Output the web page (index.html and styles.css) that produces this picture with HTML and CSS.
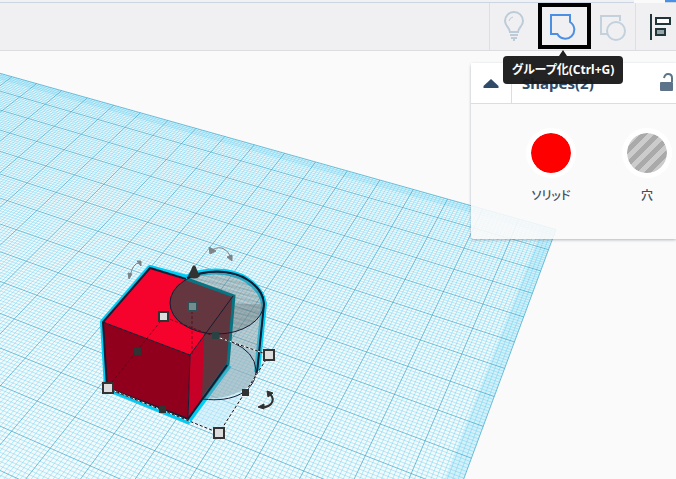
FILE: index.html
```html
<!DOCTYPE html>
<html lang="ja">
<head>
<meta charset="utf-8">
<title>3D デザイン</title>
<link rel="stylesheet" href="styles.css">
</head>
<body>
<div class="app">
  <div class="tabstrip"><span class="tab-edge"></span><span class="tab-active"></span></div>
  <header class="toolbar">
    <div class="tools">
      <button class="tool" aria-label="ヒント">
        <svg width="24" height="32" viewBox="0 0 24 32" fill="none" stroke="#bccbd8" stroke-width="2">
          <path d="M8 21C8 17 3 15 3 10a9 9 0 0 1 18 0c0 5-5 7-5 11z"/>
          <path d="M7 10a5 5 0 0 1 4-4" stroke-width="1"/>
          <path d="M8 24h8M9 27h6M11 29h2" stroke-width="2"/>
        </svg>
      </button>
      <button class="tool tool-active" aria-label="グループ化" aria-describedby="tip">
        <svg width="28" height="28" viewBox="0 0 28 28" fill="none" stroke="#4b90e2" stroke-width="2">
          <path d="M2 3h19v7A9 9 0 1 1 8.400 22H2z"/>
        </svg>
        <span class="tooltip" id="tip" role="tooltip">グループ化(Ctrl+G)</span>
      </button>
      <button class="tool" aria-label="グループ解除">
        <svg width="28" height="28" viewBox="0 0 28 28" fill="none" stroke="#c3d1dd" stroke-width="2">
          <path d="M21 8V3H2v18h6"/><circle cx="17" cy="18" r="9"/>
        </svg>
      </button>
      <button class="tool tool-align" aria-label="整列">
        <svg width="24" height="28" viewBox="0 0 24 28" fill="none" stroke="#20363b" stroke-width="2">
          <path d="M2 1v26"/><path d="M7 5h14v6H7z" fill="#fff"/><path d="M7 16h9v6H7z" fill="#98a5a8"/>
        </svg>
      </button>
    </div>
  </header>
  <main class="workspace">
    <svg class="scene" viewBox="0 51 676 428" preserveAspectRatio="xMinYMin slice" role="img" aria-label="作業平面">
      <defs>
        <pattern id="hatch" width="5" height="5" patternUnits="userSpaceOnUse" patternTransform="rotate(12)">
          <path d="M0 2h5" stroke="#374d54" stroke-opacity=".13" stroke-width="2"/>
        </pattern>
      </defs>
      <g id="plane"></g>
      <g class="rotators">
        <path d="M130 276q3-13 9-13M212 250q7-4 12-1 5 3 6 7"/>
        <path class="tip" d="M137 261l4 0 0 5zM128 273l4 1-3 5zM209 247l1 7 6-3zM227 257l5-2 0 6z"/>
      </g>
      <path class="plane-shadow" d="M103 389l117 44 49-78-62-20z"/>
      <g class="halo">
        <path d="M187 278L150 268 103 322 107 388 188 421 229 365"/>
        <path d="M186 278C200 270 230 268 247 280Q262 290 264 304L257 372"/>
      </g>
      <path class="cyl-side" d="M169 303V374C180 400 205 402 228 396Q255 388 257 373L264 304z"/>
      <ellipse class="cyl" cx="217" cy="303" rx="47" ry="31"/>
      <ellipse fill="url(#hatch)" cx="217" cy="303" rx="47" ry="31"/>
      <g class="cube">
        <path fill="#f5032d" d="M150 268l83 28-43 59-87-33z"/>
        <path fill="#90001d" d="M103 322l87 33-2 64-81-31z"/>
        <path fill="#c70027" d="M190 355l43-59-5 69-40 54z"/>
      </g>
      <path class="overlap" d="M186 280l47 16-5 69-26 34 2-66Q170 325 170 303 171 286 186 280z"/>
      <path fill="url(#hatch)" d="M186 280l47 16-5 69-26 34 2-66Q170 325 170 303 171 286 186 280z"/>
      <path class="seam" d="M187 279l47 17-6 68-24 33"/>
      <g class="edges">
        <path d="M103 322l87 33 43-59M190 355l-2 64"/>
        <ellipse cx="217" cy="303" rx="47" ry="31"/>
        <path d="M264 304l-7 69M203 399c30 4 53-8 53-29q-1-18-24-28"/>
        <path class="bold" d="M186 279l-36-11-47 54 4 66 81 31 39-54M187 278C205 269 232 269 248 280Q263 290 264 304l-7 69"/>
      </g>
      <g class="dashes">
        <path class="light" d="M107 388l112 45 50-78-52-18"/>
        <path d="M107 388l112 45 50-78-52-18"/>
        <path class="hidden" d="M109 386l55-69 52 20M192 306v50"/>
      </g>
      <g class="handles">
        <path class="black" d="M134 348h7v7h-7zM159 406h7v7h-7zM242 389h7v7h-7z"/>
        <path fill="#2a4244" d="M212 332h7v7h-7z"/>
        <path class="white" d="M159 312h9v9h-9zM103 383h10v10h-10zM264 350h10v10h-10zM214 428h10v10h-10z"/>
        <path class="veiled" d="M188 302h9v9h-9z"/>
        <path class="cone" d="M194 265q2 1 3 5l3 6q-5 5-12 0l3-6q1-4 3-5z"/>
      </g>
      <g class="rotators dark">
        <path d="M270 394q5 5 1 10-4 4-9 3"/>
        <path class="tip" d="M267 391l6 2-5 4zM258 407l6-3v5z"/>
      </g>
    </svg>
    <section class="panel">
      <div class="panel-head">
        <button class="collapse" aria-label="折りたたむ"><svg width="16" height="9" viewBox="0 0 16 9"><path fill="#2f4b68" d="M8 0l7.500 7v2H.5V7z"/></svg></button>
        <h2 class="title">Shapes(2)</h2>
        <button class="lock" aria-label="ロック"><svg width="16" height="20" viewBox="0 0 16 20"><rect y="9" x="1" width="13" height="9" rx="1" fill="#5c738a"/><path d="M5 5q1-4 4-4 4 0 4 4v4" fill="none" stroke="#5c738a" stroke-width="2"/></svg></button>
      </div>
      <div class="kinds">
        <button class="kind"><span class="swatch solid"></span>ソリッド</button>
        <button class="kind"><span class="swatch hole"></span>穴</button>
      </div>
    </section>
  </main>
</div>
<script src="plane.js"></script>
</body>
</html>
```
FILE: styles.css
```css
* { box-sizing: border-box; }
body { margin: 0; background: #fafafa; font-family: "Noto Sans", "Noto Sans CJK JP", sans-serif; font-feature-settings: "palt"; }
button { border: 0; padding: 0; background: none; font: inherit; font-feature-settings: inherit; color: inherit; }
svg { display: block; }
.app { display: flex; flex-direction: column; height: 100vh; overflow: hidden; }
.tabstrip { display: flex; justify-content: flex-end; height: 3px; background: #f0f1f5; border-bottom: 1px solid #ccd5e2; }
.tab-edge { width: 31px; height: 3px; background: #fafafa; }
.tab-active { width: 11px; height: 2px; background: #4b90e2; }
.toolbar { display: flex; justify-content: flex-end; height: 48px; background: #f0f0f3; border-bottom: 1px solid #dddddf; position: relative; z-index: 2; }
.tools { display: flex; border-left: 1px solid #dcdfe3; }
.tool { position: relative; width: 48px; display: grid; place-items: center; }
.tool-active { width: 53px; height: 46px; border: 4px solid #000; padding-right: 3px; }
.tool:nth-child(3) { width: 44px; }
.tool-align { width: 41px; border-left: 1px solid #dcdfe3; padding-left: 10px; }
.tooltip { position: absolute; top: 49px; left: 21px; transform: translateX(-50%); width: 120px; height: 28px; border-radius: 4px; background: rgba(26, 26, 26, .96); color: #fff; font-size: 12px; font-weight: 700; line-height: 28px; text-align: center; white-space: nowrap; }
.tooltip::before { content: ""; position: absolute; top: -6px; left: 50%; margin-left: -4px; border: 4px solid transparent; border-top: 0; border-bottom: 6px solid #202020; }
.workspace { position: relative; flex: 1; min-height: 0; }
.scene { width: 100%; height: 100%; }
.tint { fill: #f3fafc; }
.border { fill: #84dcf5; fill-opacity: .28; }
.minor { fill: none; stroke: #55c8ed; stroke-opacity: .38; stroke-width: 1; }
.major { fill: none; stroke: #259dc5; stroke-opacity: .62; stroke-width: 1; }
.rotators { fill: none; stroke: #7d8487; stroke-width: 1; }
.rotators .tip { fill: #7d8487; }
.rotators.dark { stroke: #303030; stroke-width: 2; }
.rotators.dark .tip { fill: #303030; stroke-width: 1; }
.plane-shadow { fill: #bde9fb; fill-opacity: .45; }
.halo { fill: none; stroke: #00cdf5; stroke-width: 6; stroke-linejoin: round; }
.cyl { fill: #6f7d82; fill-opacity: .38; }
.cyl-side { fill: #7d929a; fill-opacity: .45; }
.overlap { fill: #533c41; fill-opacity: .88; }
.seam { fill: none; stroke: #087482; stroke-width: 3; }
.edges { fill: none; stroke: #171c32; stroke-width: 1; }
.edges .bold { stroke-width: 2; }
.dashes { fill: none; stroke: #111; stroke-width: 1; stroke-dasharray: 3 2; }
.dashes .light { stroke: #fff; stroke-dasharray: none; }
.dashes .hidden { stroke: #500015; stroke-opacity: .7; }
.black, .cone { fill: #303332; }
.white { fill: #ddd; stroke: #333; stroke-width: 2; }
.veiled { fill: #718d8d; stroke: #2f5054; stroke-width: 2; }
.panel { position: absolute; top: 12px; right: 0; width: 205px; height: 176px; background: rgba(250, 250, 250, .9); border-radius: 3px 0 0 3px; box-shadow: 0 1px 3px rgba(70, 85, 110, .4); }
.panel-head { display: flex; height: 41px; background: #fff; border-bottom: 1px solid #ddd; align-items: center; }
.collapse { width: 41px; height: 40px; border-right: 1px solid #ddd; display: grid; place-items: center; }
.title { flex: 1; margin: 0; padding-left: 10px; font-size: 15px; line-height: 20px; font-weight: 700; color: #2f4b68; }
.lock { width: 17px; }
.kinds { display: flex; gap: 46px; padding: 24px 0 0 55px; }
.kind { flex: none; width: 50px; display: flex; flex-direction: column; align-items: center; gap: 9px; font-size: 12px; line-height: 18px; font-weight: 500; color: #415062; white-space: nowrap; }
.swatch { width: 50px; height: 50px; border: 5px solid #fff; border-radius: 50%; }
.solid { background: #f00 padding-box; }
.hole { background: repeating-linear-gradient(135deg, #aaa 0 5px, #ccc 5px 10px) padding-box; }
```
FILE: plane.js
```js
// Perspective projection of the work plane; (0, 0) is its far right corner.
function project(u, v) {
  const w = 1 + 0.0136 * u - 0.02514 * v;
  return [
    ((556 - 30.057 * u - 21.25 * v) / w).toFixed(2),
    ((229.5 - 7.445 * u + 13.889 * v) / w).toFixed(2)
  ].join(" ");
}
function add(cls, d) {
  const p = document.createElementNS("http://www.w3.org/2000/svg", "path");
  p.setAttribute("class", cls);
  p.setAttribute("d", d);
  document.getElementById("plane").appendChild(p);
}
function quad(u, v) {
  return "M" + [project(0, 0), project(u, 0), project(u, v), project(0, v)].join("L") + "z";
}
const COLS = 22, ROWS = 18;
add("tint", quad(COLS, ROWS));
add("border", quad(0.35, ROWS));
add("border", quad(COLS, 0.35));
let minor = "", major = "";
for (let i = 0; i <= COLS * 10; i++) {
  const d = "M" + project(i / 10, 0) + "L" + project(i / 10, ROWS);
  if (i % 10) minor += d; else major += d;
}
for (let i = 0; i <= ROWS * 10; i++) {
  const d = "M" + project(0, i / 10) + "L" + project(COLS, i / 10);
  if (i % 10) minor += d; else major += d;
}
add("minor", minor);
add("major", major);
```
